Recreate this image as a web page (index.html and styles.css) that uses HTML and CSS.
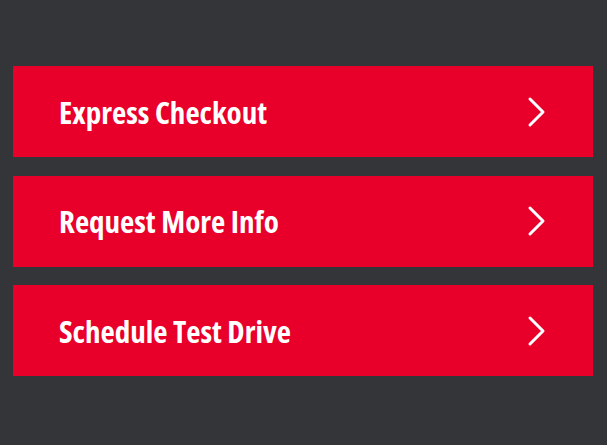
FILE: index.html
```html
<!DOCTYPE html>
<html>
<head>
<meta charset="utf-8">
<link rel="stylesheet" href="styles.css">
</head>
<body>
<div class="list">
  <a class="btn" href="#"><span class="label">Express Checkout</span><svg class="chev" viewBox="0 0 20 32" width="20" height="32"><path d="M3 3 L16 16 L3 29" fill="none" stroke="#fff" stroke-width="3" stroke-linecap="round" stroke-linejoin="round"/></svg></a>
  <a class="btn" href="#"><span class="label">Request More Info</span><svg class="chev" viewBox="0 0 20 32" width="20" height="32"><path d="M3 3 L16 16 L3 29" fill="none" stroke="#fff" stroke-width="3" stroke-linecap="round" stroke-linejoin="round"/></svg></a>
  <a class="btn" href="#"><span class="label">Schedule Test Drive</span><svg class="chev" viewBox="0 0 20 32" width="20" height="32"><path d="M3 3 L16 16 L3 29" fill="none" stroke="#fff" stroke-width="3" stroke-linecap="round" stroke-linejoin="round"/></svg></a>
</div>
</body>
</html>
```
FILE: styles.css
```css
html, body {
  margin: 0;
  padding: 0;
  background: #333539;
  height: 100%;
}
.list {
  display: flex;
  flex-direction: column;
  gap: 18.5px;
  padding: 66px 14px 0 13px;
}
.btn {
  display: flex;
  align-items: center;
  justify-content: space-between;
  height: 91px;
  background: #e8002a;
  padding: 0 46px 0 46px;
  text-decoration: none;
  color: #fff;
}
.label {
  font-family: "Open Sans", sans-serif;
  font-stretch: 75%;
  font-weight: 700;
  font-size: 31px;
  letter-spacing: 0;
}
.chev {
  display: block;
}
```
